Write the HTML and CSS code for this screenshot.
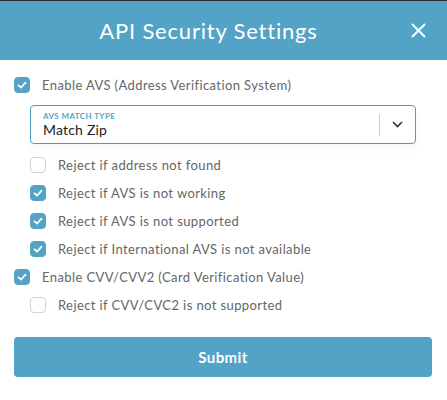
FILE: index.html
```html
<!DOCTYPE html>
<html lang="en">

<head>
  <meta charset="UTF-8" />
  <meta name="viewport" content="width=device-width, initial-scale=1" />
  <title>API Security Settings</title>
  <link rel="stylesheet" href="styles.css">
</head>

<body>
  <div class="topbar"></div>

  <div class="modal-header">
    <h1>API Security Settings</h1>
    <button class="close-btn" aria-label="Close">
      <svg width="15" height="15" viewBox="0 0 15 15">
        <path d="M1 1 L14 14 M14 1 L1 14" stroke="#fff" stroke-width="2" fill="none" />
      </svg>
    </button>
  </div>

  <div class="modal-body">
    <label class="check-row">
      <span class="box checked"><svg viewBox="0 0 16 16"><path d="M4.5 8.3 L7 10.6 L11.5 5.6" /></svg></span>
      Enable AVS (Address Verification System)
    </label>

    <div class="select-box">
      <div class="select-value">
        <span class="select-label">AVS Match Type</span>
        <span class="select-text">Match Zip</span>
      </div>
      <div class="select-arrow">
        <svg width="11" height="7" viewBox="0 0 11 7">
          <path d="M1 1 L5.5 5.5 L10 1" stroke="#333" stroke-width="1.6" fill="none" />
        </svg>
      </div>
    </div>

    <label class="check-row sub">
      <span class="box"></span>
      Reject if address not found
    </label>
    <label class="check-row sub">
      <span class="box checked"><svg viewBox="0 0 16 16"><path d="M4.5 8.3 L7 10.6 L11.5 5.6" /></svg></span>
      Reject if AVS is not working
    </label>
    <label class="check-row sub">
      <span class="box checked"><svg viewBox="0 0 16 16"><path d="M4.5 8.3 L7 10.6 L11.5 5.6" /></svg></span>
      Reject if AVS is not supported
    </label>
    <label class="check-row sub">
      <span class="box checked"><svg viewBox="0 0 16 16"><path d="M4.5 8.3 L7 10.6 L11.5 5.6" /></svg></span>
      Reject if International AVS is not available
    </label>

    <label class="check-row">
      <span class="box checked"><svg viewBox="0 0 16 16"><path d="M4.5 8.3 L7 10.6 L11.5 5.6" /></svg></span>
      Enable CVV/CVV2 (Card Verification Value)
    </label>
    <label class="check-row sub">
      <span class="box"></span>
      Reject if CVV/CVC2 is not supported
    </label>

    <button class="submit-btn">Submit</button>
  </div>
</body>

</html>
```

FILE: styles.css
```css
body {
  margin: 0;
  background: #fff;
  font-family: 'Lato', sans-serif;
  color: #666;
}

.topbar {
  height: 1px;
  background: #2b2f34;
}

.modal-header {
  height: 59px;
  background: #52a3c6;
  display: flex;
  align-items: center;
  padding: 0 14px;
}

.modal-header h1 {
  flex: 1;
  margin: 0;
  text-align: center;
  font-size: 22px;
  font-weight: 400;
  color: #fff;
  letter-spacing: 0.8px;
}

.close-btn {
  width: 30px;
  height: 30px;
  padding: 0;
  border: none;
  background: none;
  display: flex;
  justify-content: center;
  align-items: center;
  cursor: pointer;
}

.modal-body {
  padding: 11px 15px 0 14px;
}

.check-row {
  height: 28px;
  display: flex;
  align-items: center;
  gap: 12px;
  font-size: 13px;
  letter-spacing: 0.4px;
  cursor: pointer;
}

.check-row.sub {
  padding-left: 16px;
}

.box {
  width: 16px;
  height: 16px;
  box-sizing: border-box;
  border: 1px solid #d2d2d2;
  border-radius: 4px;
  background: #fff;
  flex-shrink: 0;
  display: flex;
}

.box.checked {
  background: #52a3c6;
  border-color: #52a3c6;
}

.box svg {
  width: 16px;
  height: 16px;
  margin: -1px;
}

.box svg path {
  stroke: #fff;
  stroke-width: 1.8;
  fill: none;
  stroke-linecap: round;
  stroke-linejoin: round;
}

.select-box {
  margin: 6px 16px 7px 16px;
  height: 39px;
  box-sizing: border-box;
  border: 1px solid #4f9ec2;
  border-radius: 4px;
  display: flex;
  align-items: center;
  box-shadow: 0 6px 10px rgba(0, 0, 0, 0.03);
}

.select-value {
  flex: 1;
  display: flex;
  flex-direction: column;
  padding-left: 12px;
}

.select-label {
  font-size: 8px;
  font-weight: 700;
  text-transform: uppercase;
  color: #52a3c6;
  letter-spacing: 0.4px;
  line-height: 10px;
}

.select-text {
  font-size: 14px;
  color: #222;
  line-height: 17px;
  letter-spacing: 0.2px;
}

.select-arrow {
  width: 35px;
  height: 22px;
  border-left: 1px solid #ccc;
  display: flex;
  justify-content: center;
  align-items: center;
}

.submit-btn {
  display: block;
  width: 100%;
  height: 40px;
  margin-top: 18px;
  border: none;
  border-radius: 4px;
  background: #52a3c6;
  color: #fff;
  font-family: 'Lato', sans-serif;
  font-size: 15px;
  font-weight: 700;
  letter-spacing: 0.4px;
  cursor: pointer;
}
```
